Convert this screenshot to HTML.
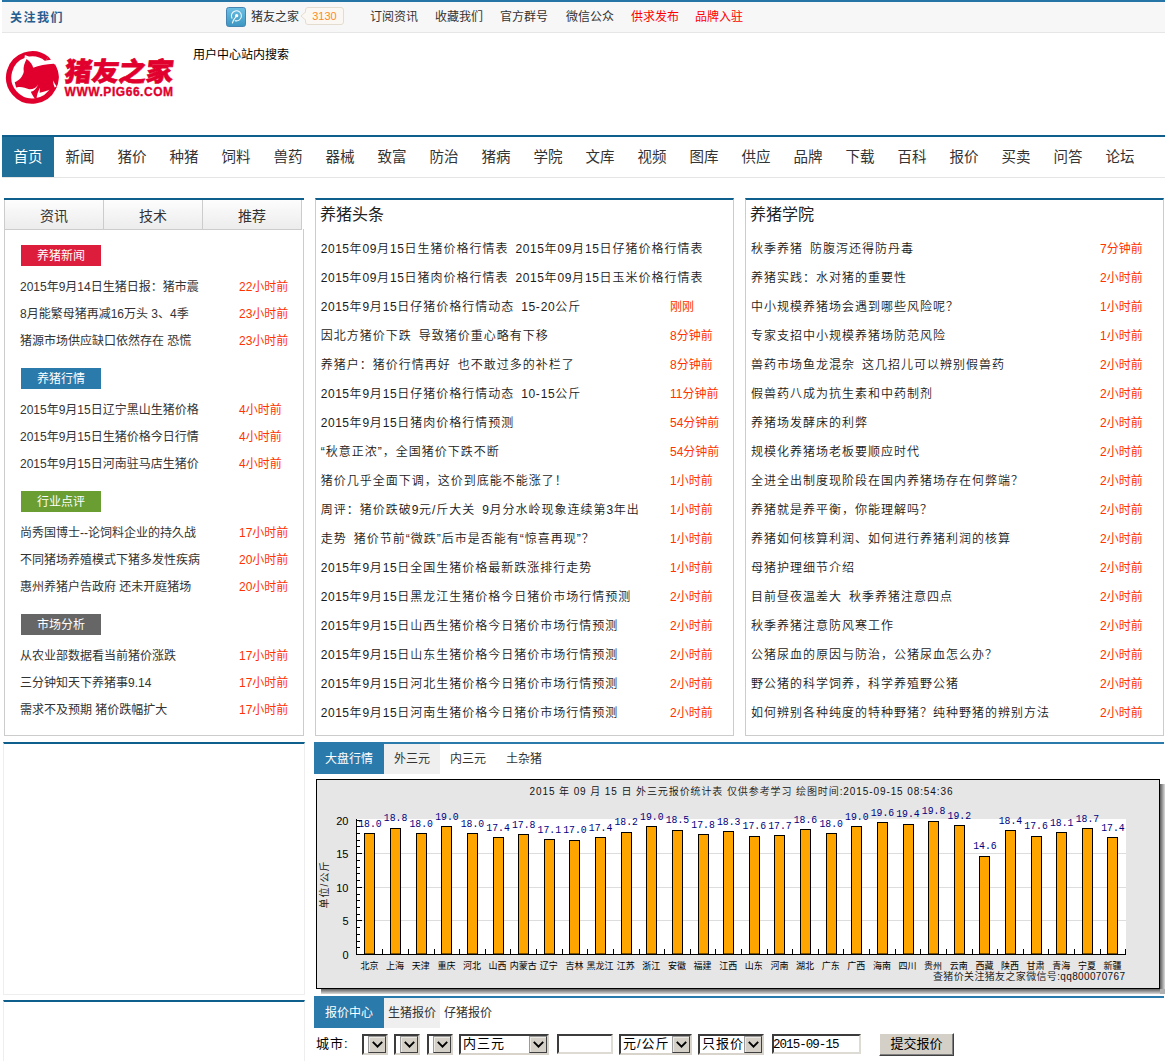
<!DOCTYPE html>
<html lang="zh-CN">
<head>
<meta charset="utf-8">
<title>猪友之家</title>
<style>
*{margin:0;padding:0;box-sizing:border-box;}
html,body{width:1167px;height:1061px;overflow:hidden;background:#fff;}
body{font-family:"Liberation Sans","Noto Sans CJK SC",sans-serif;font-size:12px;color:#333;position:relative;}
.abs{position:absolute;}
#topbar{left:2px;top:0;width:1163px;height:33px;border-top:2px solid #2576a6;border-bottom:1px solid #e6e6e6;background:#f7f7f7;}
#topbar .t{position:absolute;top:5px;line-height:20px;font-size:12px;color:#333;white-space:nowrap;}
#logo{left:0;top:45px;width:180px;height:65px;}
#logo .cn{position:absolute;left:62.5px;top:13px;font-size:27.5px;line-height:27px;font-weight:900;color:#e1002d;white-space:nowrap;transform:skewX(-7deg) scaleY(.95);transform-origin:0 100%;-webkit-text-stroke:.7px #e1002d;letter-spacing:-.3px}
#logo .en{position:absolute;left:64.5px;top:40px;font-size:12px;line-height:14px;font-weight:bold;color:#e1002d;white-space:nowrap;letter-spacing:.55px;-webkit-text-stroke:.35px #e1002d;}
#usr{left:193px;top:48px;font-size:12px;line-height:14px;color:#000;white-space:nowrap;}
#nav{left:2px;top:135px;width:1163px;height:43px;border-top:2px solid #0f5f8d;border-bottom:1px solid #e5e5e5;background:#fff;}
#nav a{float:left;width:52px;height:40px;line-height:40px;text-align:center;font-size:14.5px;color:#333;text-decoration:none;}
#nav a.on{background:#206f98;color:#fff;}
#lp{left:4px;top:198px;width:300px;height:538px;}
#lp .tabs{height:31px;border-top:2px solid #0f5f8d;position:relative;}
#lp .tabs span{position:absolute;top:0;height:30px;width:100px;line-height:32px;text-align:center;font-size:14px;color:#333;border:1px solid #ccc;border-top:0;background:linear-gradient(#fdfdfd,#ececec);}
#lp .body{position:absolute;left:0;top:31px;width:300px;height:507px;border:1px solid #ccc;border-top:0;}
.tag{position:absolute;left:16px;width:80px;height:21px;line-height:22.5px;text-align:center;color:#fff;font-size:12px;}
.lrow{position:absolute;left:15px;width:275px;height:20px;line-height:20px;font-size:12px;color:#333;white-space:nowrap;}
.lrow i{position:absolute;left:219px;top:0;font-style:normal;color:#ff3300;}
.panel{border:1px solid #ccc;border-top:2px solid #0f5f8d;background:#fff;}
.panel h3{position:absolute;left:4px;top:4px;font-size:16px;line-height:22px;font-weight:normal;color:#222;}
.row{position:absolute;left:4.7px;height:20px;line-height:20px;font-size:12px;color:#1a1a1a;font-weight:350;letter-spacing:1px;word-spacing:2.7px;white-space:nowrap;}
.row u{text-decoration:none;letter-spacing:.55px;}
.row i{position:absolute;top:0;font-style:normal;color:#ff3300;letter-spacing:0;font-weight:400;}
#mp .row i{left:349.3px;}
#rp .row i{left:349px;}
.stab{position:absolute;top:0;height:30px;line-height:31px;font-size:12px;color:#333;text-align:center;white-space:nowrap;}
.stab.on{background:#2a7aab;color:#fff;}
.stab.g{background:#efefef;}
.sel{position:absolute;top:1034px;height:21px;border:2px solid;border-color:#3c3c3c #d8d4cc #d8d4cc #3c3c3c;background:#fff;font-size:13px;line-height:16px;color:#000;white-space:nowrap;overflow:hidden;padding-left:2px;letter-spacing:1px;}
.sel b{position:absolute;right:0;top:0;bottom:0;width:18px;background:#d4d0c8;border:1px solid;border-color:#9a9a9a #404040 #404040 #9a9a9a;box-shadow:inset 1px 1px 0 #ece9e2;font-weight:normal;}
.sel b svg{position:absolute;left:3px;top:4px;}
.inp{position:absolute;top:1034px;height:20px;border:2px solid;border-color:#3c3c3c #dedbd4 #dedbd4 #3c3c3c;background:#fff;font-size:12.5px;line-height:18px;color:#000;padding-left:0;text-indent:-1px;letter-spacing:-.95px;font-family:"Liberation Mono",monospace;}
</style>
</head>
<body>
<div id="topbar" class="abs">
<span class="t" style="left:8px;top:6px;font-weight:bold;color:#275c8e;letter-spacing:1.5px">关注我们</span>
<svg class="abs" style="left:224px;top:5px" width="20" height="20" viewBox="0 0 20 20"><defs><linearGradient id="tg" x1="0" y1="0" x2="0" y2="1"><stop offset="0" stop-color="#6cc0e4"/><stop offset="1" stop-color="#3b96c1"/></linearGradient></defs><rect x=".5" y=".5" width="19" height="19" rx="2.2" fill="url(#tg)" stroke="#4684b4"/><path d="M5.99 11.20 A5.0 5.0 0 1 1 9.11 13.68" fill="none" stroke="#f2fafd" stroke-width="1.05" stroke-linecap="round"/><circle cx="10.65" cy="8.7" r="1.65" fill="#fff"/><path d="M10 9.6 C8.6 11.2 7.2 13 6.4 16" fill="none" stroke="#f2fafd" stroke-width="1.05" stroke-linecap="round"/></svg>
<span class="t" style="left:249px">猪友之家</span>
<span class="abs" style="left:303px;top:5px;width:39px;height:18px;border:1px solid #e3dccf;border-radius:3px;background:#fbf8f3;color:#ff8a1f;font-size:11px;line-height:17px;text-align:center;">3130</span>
<svg class="abs" style="left:298px;top:9px" width="6" height="10" viewBox="0 0 6 10"><path d="M6 0.5 L1 5 L6 9.5" fill="#fbf8f3" stroke="#e3dccf"/></svg>
<span class="t" style="left:368px;color:#333">订阅资讯</span>
<span class="t" style="left:433px;color:#333">收藏我们</span>
<span class="t" style="left:498px;color:#333">官方群号</span>
<span class="t" style="left:564px;color:#333">微信公众</span>
<span class="t" style="left:629px;color:#f00">供求发布</span>
<span class="t" style="left:693px;color:#f00">品牌入驻</span>
</div>
<div id="logo" class="abs">
<svg class="abs" style="left:2px;top:3px" width="60" height="60" viewBox="0 0 1061 1061"><g fill="#e1002d"><path d="M896.6 311 A417.5 417.5 0 1 1 792 191" fill="none" stroke="#e1002d" stroke-width="95"/><path d="M821 154 L866 207 L750 224 L762 228 Z"/><path d="M435 195 C500 240 540 300 552 350 C650 310 780 288 915 280 L926 287 A465 465 0 0 1 950 730 L920 705 C860 740 760 775 665 790 L672 705 C640 770 615 830 612 890 L580 895 C555 860 525 820 510 775 C570 760 615 710 640 640 C610 700 560 730 480 728 C420 710 340 680 275 695 L250 700 L225 605 C300 580 370 500 385 420 C370 340 400 260 435 195 Z"/></g><path d="M905 575 C903 620 913 660 933 697 L966 682 C940 650 920 610 905 575 Z" fill="#fff"/><path d="M405 125 L482 156 L440 166 L396 190 Z" fill="#fff"/></svg>
<span class="cn">猪友之家</span>
<span class="en">WWW.PIG66.COM</span>
</div>
<div id="usr" class="abs">用户中心站内搜索</div>
<div id="nav" class="abs"><a class="on">首页</a><a>新闻</a><a>猪价</a><a>种猪</a><a>饲料</a><a>兽药</a><a>器械</a><a>致富</a><a>防治</a><a>猪病</a><a>学院</a><a>文库</a><a>视频</a><a>图库</a><a>供应</a><a>品牌</a><a>下载</a><a>百科</a><a>报价</a><a>买卖</a><a>问答</a><a>论坛</a></div>
<div id="lp" class="abs"><div class="tabs">
<span style="left:0px">资讯</span>
<span style="left:99px">技术</span>
<span style="left:198px">推荐</span>
</div><div class="body">
<div class="tag" style="top:16px;background:#dc1e3c">养猪新闻</div>
<div class="lrow" style="top:48px">2015年9月14日生猪日报：猪市震<i>22小时前</i></div>
<div class="lrow" style="top:75px">8月能繁母猪再减16万头 3、4季<i>23小时前</i></div>
<div class="lrow" style="top:102px">猪源市场供应缺口依然存在 恐慌<i>23小时前</i></div>
<div class="tag" style="top:139px;background:#2a7aab">养猪行情</div>
<div class="lrow" style="top:171px">2015年9月15日辽宁黑山生猪价格<i>4小时前</i></div>
<div class="lrow" style="top:198px">2015年9月15日生猪价格今日行情<i>4小时前</i></div>
<div class="lrow" style="top:225px">2015年9月15日河南驻马店生猪价<i>4小时前</i></div>
<div class="tag" style="top:262px;background:#6a9e32">行业点评</div>
<div class="lrow" style="top:294px">尚秀国博士--论饲料企业的持久战<i>17小时前</i></div>
<div class="lrow" style="top:321px">不同猪场养殖模式下猪多发性疾病<i>20小时前</i></div>
<div class="lrow" style="top:348px">惠州养猪户告政府 还未开庭猪场<i>20小时前</i></div>
<div class="tag" style="top:385px;background:#666666">市场分析</div>
<div class="lrow" style="top:417px">从农业部数据看当前猪价涨跌<i>17小时前</i></div>
<div class="lrow" style="top:444px">三分钟知天下养猪事9.14<i>17小时前</i></div>
<div class="lrow" style="top:471px">需求不及预期 猪价跌幅扩大<i>17小时前</i></div>
</div></div>
<div class="abs" style="left:3px;top:742px;width:302px;height:253px;border:1px solid #eee;border-top:2px solid #0f5f8d"></div>
<div class="abs" style="left:3px;top:1000px;width:302px;height:70px;border:1px solid #eee;border-top:2px solid #0f5f8d"></div>
<div id="mp" class="abs panel" style="left:315px;top:198px;width:419px;height:538px"><h3>养猪头条</h3>
<div class="row" style="top:39px"><u>2015</u>年<u>09</u>月<u>15</u>日生猪价格行情表 <u>2015</u>年<u>09</u>月<u>15</u>日仔猪价格行情表</div>
<div class="row" style="top:68px"><u>2015</u>年<u>09</u>月<u>15</u>日猪肉价格行情表 <u>2015</u>年<u>09</u>月<u>15</u>日玉米价格行情表</div>
<div class="row" style="top:97px"><u>2015</u>年<u>9</u>月<u>15</u>日仔猪价格行情动态 <u>15</u>-<u>20</u>公斤<i>刚刚</i></div>
<div class="row" style="top:126px">因北方猪价下跌 导致猪价重心略有下移<i>8分钟前</i></div>
<div class="row" style="top:155px">养猪户：猪价行情再好 也不敢过多的补栏了<i>8分钟前</i></div>
<div class="row" style="top:184px"><u>2015</u>年<u>9</u>月<u>15</u>日仔猪价格行情动态 <u>10</u>-<u>15</u>公斤<i>11分钟前</i></div>
<div class="row" style="top:213px"><u>2015</u>年<u>9</u>月<u>15</u>日猪肉价格行情预测<i>54分钟前</i></div>
<div class="row" style="top:242px">“秋意正浓”，全国猪价下跌不断<i>54分钟前</i></div>
<div class="row" style="top:271px">猪价几乎全面下调，这价到底能不能涨了！<i>1小时前</i></div>
<div class="row" style="top:300px">周评：猪价跌破<u>9</u>元/斤大关 <u>9</u>月分水岭现象连续第<u>3</u>年出<i>1小时前</i></div>
<div class="row" style="top:329px">走势 猪价节前“微跌”后市是否能有“惊喜再现”？<i>1小时前</i></div>
<div class="row" style="top:358px"><u>2015</u>年<u>9</u>月<u>15</u>日全国生猪价格最新跌涨排行走势<i>1小时前</i></div>
<div class="row" style="top:387px"><u>2015</u>年<u>9</u>月<u>15</u>日黑龙江生猪价格今日猪价市场行情预测<i>2小时前</i></div>
<div class="row" style="top:416px"><u>2015</u>年<u>9</u>月<u>15</u>日山西生猪价格今日猪价市场行情预测<i>2小时前</i></div>
<div class="row" style="top:445px"><u>2015</u>年<u>9</u>月<u>15</u>日山东生猪价格今日猪价市场行情预测<i>2小时前</i></div>
<div class="row" style="top:474px"><u>2015</u>年<u>9</u>月<u>15</u>日河北生猪价格今日猪价市场行情预测<i>2小时前</i></div>
<div class="row" style="top:503px"><u>2015</u>年<u>9</u>月<u>15</u>日河南生猪价格今日猪价市场行情预测<i>2小时前</i></div>
</div>
<div id="rp" class="abs panel" style="left:745px;top:198px;width:419px;height:538px"><h3 style="left:4px">养猪学院</h3>
<div class="row" style="top:39px;left:5px">秋季养猪 防腹泻还得防丹毒<i style="left:349px">7分钟前</i></div>
<div class="row" style="top:68px;left:5px">养猪实践：水对猪的重要性<i style="left:349px">2小时前</i></div>
<div class="row" style="top:97px;left:5px">中小规模养猪场会遇到哪些风险呢？<i style="left:349px">1小时前</i></div>
<div class="row" style="top:126px;left:5px">专家支招中小规模养猪场防范风险<i style="left:349px">1小时前</i></div>
<div class="row" style="top:155px;left:5px">兽药市场鱼龙混杂 这几招儿可以辨别假兽药<i style="left:349px">2小时前</i></div>
<div class="row" style="top:184px;left:5px">假兽药八成为抗生素和中药制剂<i style="left:349px">2小时前</i></div>
<div class="row" style="top:213px;left:5px">养猪场发酵床的利弊<i style="left:349px">2小时前</i></div>
<div class="row" style="top:242px;left:5px">规模化养猪场老板要顺应时代<i style="left:349px">2小时前</i></div>
<div class="row" style="top:271px;left:5px">全进全出制度现阶段在国内养猪场存在何弊端？<i style="left:349px">2小时前</i></div>
<div class="row" style="top:300px;left:5px">养猪就是养平衡，你能理解吗？<i style="left:349px">2小时前</i></div>
<div class="row" style="top:329px;left:5px">养猪如何核算利润、如何进行养猪利润的核算<i style="left:349px">2小时前</i></div>
<div class="row" style="top:358px;left:5px">母猪护理细节介绍<i style="left:349px">2小时前</i></div>
<div class="row" style="top:387px;left:5px">目前昼夜温差大 秋季养猪注意四点<i style="left:349px">2小时前</i></div>
<div class="row" style="top:416px;left:5px">秋季养猪注意防风寒工作<i style="left:349px">2小时前</i></div>
<div class="row" style="top:445px;left:5px">公猪尿血的原因与防治，公猪尿血怎么办？<i style="left:349px">2小时前</i></div>
<div class="row" style="top:474px;left:5px">野公猪的科学饲养，科学养殖野公猪<i style="left:349px">2小时前</i></div>
<div class="row" style="top:503px;left:5px">如何辨别各种纯度的特种野猪？纯种野猪的辨别方法<i style="left:349px">2小时前</i></div>
</div>
<div class="abs" style="left:314px;top:742px;width:850px;height:32px;border-top:2px solid #2a7aab">
<span class="stab on" style="left:0;width:70px">大盘行情</span>
<span class="stab g" style="left:70px;width:56px">外三元</span>
<span class="stab" style="left:126px;width:56px">内三元</span>
<span class="stab" style="left:182px;width:56px">土杂猪</span>
</div>
<svg class="abs" style="left:316px;top:779px" width="850" height="216" viewBox="0 0 850 216" font-family="Liberation Sans, Noto Sans CJK SC, sans-serif">
<defs><linearGradient id="sh1" x1="0" y1="0" x2="1" y2="0"><stop offset="0" stop-color="#5c5c5c"/><stop offset="1" stop-color="#dcdcdc"/></linearGradient><linearGradient id="sh2" x1="0" y1="0" x2="0" y2="1"><stop offset="0" stop-color="#5c5c5c"/><stop offset="1" stop-color="#dcdcdc"/></linearGradient></defs>
<rect x="844" y="5" width="5" height="209" fill="url(#sh1)"/>
<rect x="5" y="210" width="839" height="5" fill="url(#sh2)"/>
<path d="M844 210 h5 v5 h-5 z" fill="#b0b0b0"/>
<rect x="0.5" y="0.5" width="843" height="209" fill="#e6e6e6" stroke="#000"/>
<rect x="40" y="40" width="770" height="135" fill="#fff"/>
<line x1="40" y1="141.5" x2="810" y2="141.5" stroke="#ddd"/>
<line x1="40" y1="108.5" x2="810" y2="108.5" stroke="#ddd"/>
<line x1="40" y1="74.5" x2="810" y2="74.5" stroke="#ddd"/>
<path d="M40.5 40 V175.5 H810" fill="none" stroke="#000"/>
<line x1="40" y1="175.5" x2="46" y2="175.5" stroke="#000"/>
<line x1="40" y1="168.5" x2="44" y2="168.5" stroke="#000"/>
<line x1="40" y1="162.5" x2="44" y2="162.5" stroke="#000"/>
<line x1="40" y1="155.5" x2="44" y2="155.5" stroke="#000"/>
<line x1="40" y1="148.5" x2="44" y2="148.5" stroke="#000"/>
<line x1="40" y1="141.5" x2="46" y2="141.5" stroke="#000"/>
<line x1="40" y1="135.5" x2="44" y2="135.5" stroke="#000"/>
<line x1="40" y1="128.5" x2="44" y2="128.5" stroke="#000"/>
<line x1="40" y1="121.5" x2="44" y2="121.5" stroke="#000"/>
<line x1="40" y1="115.5" x2="44" y2="115.5" stroke="#000"/>
<line x1="40" y1="108.5" x2="46" y2="108.5" stroke="#000"/>
<line x1="40" y1="101.5" x2="44" y2="101.5" stroke="#000"/>
<line x1="40" y1="94.5" x2="44" y2="94.5" stroke="#000"/>
<line x1="40" y1="88.5" x2="44" y2="88.5" stroke="#000"/>
<line x1="40" y1="81.5" x2="44" y2="81.5" stroke="#000"/>
<line x1="40" y1="74.5" x2="46" y2="74.5" stroke="#000"/>
<line x1="40" y1="67.5" x2="44" y2="67.5" stroke="#000"/>
<line x1="40" y1="61.5" x2="44" y2="61.5" stroke="#000"/>
<line x1="40" y1="54.5" x2="44" y2="54.5" stroke="#000"/>
<line x1="40" y1="47.5" x2="44" y2="47.5" stroke="#000"/>
<line x1="40" y1="41.5" x2="46" y2="41.5" stroke="#000"/>
<text x="32.5" y="180" font-size="11" text-anchor="end" fill="#000">0</text>
<text x="32.5" y="146.4" font-size="11" text-anchor="end" fill="#000">5</text>
<text x="32.5" y="112.8" font-size="11" text-anchor="end" fill="#000">10</text>
<text x="32.5" y="79.2" font-size="11" text-anchor="end" fill="#000">15</text>
<text x="32.5" y="45.6" font-size="11" text-anchor="end" fill="#000">20</text>
<text x="425" y="16" font-size="10" font-weight="350" text-anchor="middle" fill="#111" textLength="423" lengthAdjust="spacing">2015 年 09 月 15 日 外三元报价统计表 仅供参考学习 绘图时间:2015-09-15 08:54:36</text>
<text transform="translate(12 106) rotate(-90)" font-size="10" text-anchor="middle" fill="#222" textLength="47" lengthAdjust="spacing">单位/公斤</text>
<rect x="48.5" y="54.5" width="10" height="120.5" fill="#ffa500" stroke="#000"/>
<line x1="66.5" y1="170" x2="66.5" y2="175" stroke="#000"/>
<text x="54.0" y="47.5" font-size="11" text-anchor="middle" fill="#000080" font-family="Liberation Mono, monospace" textLength="23.5" lengthAdjust="spacingAndGlyphs">18.0</text>
<text x="53.5" y="189.5" font-size="9" text-anchor="middle" fill="#000">北京</text>
<rect x="74.5" y="49.5" width="10" height="125.5" fill="#ffa500" stroke="#000"/>
<line x1="92.5" y1="170" x2="92.5" y2="175" stroke="#000"/>
<text x="79.6" y="42.2" font-size="11" text-anchor="middle" fill="#000080" font-family="Liberation Mono, monospace" textLength="23.5" lengthAdjust="spacingAndGlyphs">18.8</text>
<text x="79.1" y="189.5" font-size="9" text-anchor="middle" fill="#000">上海</text>
<rect x="100.5" y="54.5" width="10" height="120.5" fill="#ffa500" stroke="#000"/>
<line x1="118.5" y1="170" x2="118.5" y2="175" stroke="#000"/>
<text x="105.2" y="47.5" font-size="11" text-anchor="middle" fill="#000080" font-family="Liberation Mono, monospace" textLength="23.5" lengthAdjust="spacingAndGlyphs">18.0</text>
<text x="104.7" y="189.5" font-size="9" text-anchor="middle" fill="#000">天津</text>
<rect x="125.5" y="47.5" width="10" height="127.5" fill="#ffa500" stroke="#000"/>
<line x1="143.5" y1="170" x2="143.5" y2="175" stroke="#000"/>
<text x="130.9" y="40.8" font-size="11" text-anchor="middle" fill="#000080" font-family="Liberation Mono, monospace" textLength="23.5" lengthAdjust="spacingAndGlyphs">19.0</text>
<text x="130.4" y="189.5" font-size="9" text-anchor="middle" fill="#000">重庆</text>
<rect x="151.5" y="54.5" width="10" height="120.5" fill="#ffa500" stroke="#000"/>
<line x1="169.5" y1="170" x2="169.5" y2="175" stroke="#000"/>
<text x="156.5" y="47.5" font-size="11" text-anchor="middle" fill="#000080" font-family="Liberation Mono, monospace" textLength="23.5" lengthAdjust="spacingAndGlyphs">18.0</text>
<text x="156.0" y="189.5" font-size="9" text-anchor="middle" fill="#000">河北</text>
<rect x="177.5" y="58.5" width="10" height="116.5" fill="#ffa500" stroke="#000"/>
<line x1="194.5" y1="170" x2="194.5" y2="175" stroke="#000"/>
<text x="182.1" y="51.6" font-size="11" text-anchor="middle" fill="#000080" font-family="Liberation Mono, monospace" textLength="23.5" lengthAdjust="spacingAndGlyphs">17.4</text>
<text x="181.6" y="189.5" font-size="9" text-anchor="middle" fill="#000">山西</text>
<rect x="202.5" y="55.5" width="10" height="119.5" fill="#ffa500" stroke="#000"/>
<line x1="220.5" y1="170" x2="220.5" y2="175" stroke="#000"/>
<text x="207.7" y="48.9" font-size="11" text-anchor="middle" fill="#000080" font-family="Liberation Mono, monospace" textLength="23.5" lengthAdjust="spacingAndGlyphs">17.8</text>
<text x="207.2" y="189.5" font-size="9" text-anchor="middle" fill="#000">内蒙古</text>
<rect x="228.5" y="60.5" width="10" height="114.5" fill="#ffa500" stroke="#000"/>
<line x1="246.5" y1="170" x2="246.5" y2="175" stroke="#000"/>
<text x="233.3" y="53.6" font-size="11" text-anchor="middle" fill="#000080" font-family="Liberation Mono, monospace" textLength="23.5" lengthAdjust="spacingAndGlyphs">17.1</text>
<text x="232.8" y="189.5" font-size="9" text-anchor="middle" fill="#000">辽宁</text>
<rect x="253.5" y="61.5" width="10" height="113.5" fill="#ffa500" stroke="#000"/>
<line x1="271.5" y1="170" x2="271.5" y2="175" stroke="#000"/>
<text x="259.0" y="54.3" font-size="11" text-anchor="middle" fill="#000080" font-family="Liberation Mono, monospace" textLength="23.5" lengthAdjust="spacingAndGlyphs">17.0</text>
<text x="258.5" y="189.5" font-size="9" text-anchor="middle" fill="#000">吉林</text>
<rect x="279.5" y="58.5" width="10" height="116.5" fill="#ffa500" stroke="#000"/>
<line x1="297.5" y1="170" x2="297.5" y2="175" stroke="#000"/>
<text x="284.6" y="51.6" font-size="11" text-anchor="middle" fill="#000080" font-family="Liberation Mono, monospace" textLength="23.5" lengthAdjust="spacingAndGlyphs">17.4</text>
<text x="284.1" y="189.5" font-size="9" text-anchor="middle" fill="#000">黑龙江</text>
<rect x="305.5" y="53.5" width="10" height="121.5" fill="#ffa500" stroke="#000"/>
<line x1="323.5" y1="170" x2="323.5" y2="175" stroke="#000"/>
<text x="310.2" y="46.2" font-size="11" text-anchor="middle" fill="#000080" font-family="Liberation Mono, monospace" textLength="23.5" lengthAdjust="spacingAndGlyphs">18.2</text>
<text x="309.7" y="189.5" font-size="9" text-anchor="middle" fill="#000">江苏</text>
<rect x="330.5" y="47.5" width="10" height="127.5" fill="#ffa500" stroke="#000"/>
<line x1="348.5" y1="170" x2="348.5" y2="175" stroke="#000"/>
<text x="335.8" y="40.8" font-size="11" text-anchor="middle" fill="#000080" font-family="Liberation Mono, monospace" textLength="23.5" lengthAdjust="spacingAndGlyphs">19.0</text>
<text x="335.3" y="189.5" font-size="9" text-anchor="middle" fill="#000">浙江</text>
<rect x="356.5" y="51.5" width="10" height="123.5" fill="#ffa500" stroke="#000"/>
<line x1="374.5" y1="170" x2="374.5" y2="175" stroke="#000"/>
<text x="361.4" y="44.2" font-size="11" text-anchor="middle" fill="#000080" font-family="Liberation Mono, monospace" textLength="23.5" lengthAdjust="spacingAndGlyphs">18.5</text>
<text x="360.9" y="189.5" font-size="9" text-anchor="middle" fill="#000">安徽</text>
<rect x="382.5" y="55.5" width="10" height="119.5" fill="#ffa500" stroke="#000"/>
<line x1="399.5" y1="170" x2="399.5" y2="175" stroke="#000"/>
<text x="387.1" y="48.9" font-size="11" text-anchor="middle" fill="#000080" font-family="Liberation Mono, monospace" textLength="23.5" lengthAdjust="spacingAndGlyphs">17.8</text>
<text x="386.6" y="189.5" font-size="9" text-anchor="middle" fill="#000">福建</text>
<rect x="407.5" y="52.5" width="10" height="122.5" fill="#ffa500" stroke="#000"/>
<line x1="425.5" y1="170" x2="425.5" y2="175" stroke="#000"/>
<text x="412.7" y="45.5" font-size="11" text-anchor="middle" fill="#000080" font-family="Liberation Mono, monospace" textLength="23.5" lengthAdjust="spacingAndGlyphs">18.3</text>
<text x="412.2" y="189.5" font-size="9" text-anchor="middle" fill="#000">江西</text>
<rect x="433.5" y="57.5" width="10" height="117.5" fill="#ffa500" stroke="#000"/>
<line x1="451.5" y1="170" x2="451.5" y2="175" stroke="#000"/>
<text x="438.3" y="50.2" font-size="11" text-anchor="middle" fill="#000080" font-family="Liberation Mono, monospace" textLength="23.5" lengthAdjust="spacingAndGlyphs">17.6</text>
<text x="437.8" y="189.5" font-size="9" text-anchor="middle" fill="#000">山东</text>
<rect x="458.5" y="56.5" width="10" height="118.5" fill="#ffa500" stroke="#000"/>
<line x1="476.5" y1="170" x2="476.5" y2="175" stroke="#000"/>
<text x="463.9" y="49.6" font-size="11" text-anchor="middle" fill="#000080" font-family="Liberation Mono, monospace" textLength="23.5" lengthAdjust="spacingAndGlyphs">17.7</text>
<text x="463.4" y="189.5" font-size="9" text-anchor="middle" fill="#000">河南</text>
<rect x="484.5" y="50.5" width="10" height="124.5" fill="#ffa500" stroke="#000"/>
<line x1="502.5" y1="170" x2="502.5" y2="175" stroke="#000"/>
<text x="489.5" y="43.5" font-size="11" text-anchor="middle" fill="#000080" font-family="Liberation Mono, monospace" textLength="23.5" lengthAdjust="spacingAndGlyphs">18.6</text>
<text x="489.0" y="189.5" font-size="9" text-anchor="middle" fill="#000">湖北</text>
<rect x="510.5" y="54.5" width="10" height="120.5" fill="#ffa500" stroke="#000"/>
<line x1="527.5" y1="170" x2="527.5" y2="175" stroke="#000"/>
<text x="515.2" y="47.5" font-size="11" text-anchor="middle" fill="#000080" font-family="Liberation Mono, monospace" textLength="23.5" lengthAdjust="spacingAndGlyphs">18.0</text>
<text x="514.7" y="189.5" font-size="9" text-anchor="middle" fill="#000">广东</text>
<rect x="535.5" y="47.5" width="10" height="127.5" fill="#ffa500" stroke="#000"/>
<line x1="553.5" y1="170" x2="553.5" y2="175" stroke="#000"/>
<text x="540.8" y="40.8" font-size="11" text-anchor="middle" fill="#000080" font-family="Liberation Mono, monospace" textLength="23.5" lengthAdjust="spacingAndGlyphs">19.0</text>
<text x="540.3" y="189.5" font-size="9" text-anchor="middle" fill="#000">广西</text>
<rect x="561.5" y="43.5" width="10" height="131.5" fill="#ffa500" stroke="#000"/>
<line x1="579.5" y1="170" x2="579.5" y2="175" stroke="#000"/>
<text x="566.4" y="36.8" font-size="11" text-anchor="middle" fill="#000080" font-family="Liberation Mono, monospace" textLength="23.5" lengthAdjust="spacingAndGlyphs">19.6</text>
<text x="565.9" y="189.5" font-size="9" text-anchor="middle" fill="#000">海南</text>
<rect x="587.5" y="45.5" width="10" height="129.5" fill="#ffa500" stroke="#000"/>
<line x1="604.5" y1="170" x2="604.5" y2="175" stroke="#000"/>
<text x="592.0" y="38.1" font-size="11" text-anchor="middle" fill="#000080" font-family="Liberation Mono, monospace" textLength="23.5" lengthAdjust="spacingAndGlyphs">19.4</text>
<text x="591.5" y="189.5" font-size="9" text-anchor="middle" fill="#000">四川</text>
<rect x="612.5" y="42.5" width="10" height="132.5" fill="#ffa500" stroke="#000"/>
<line x1="630.5" y1="170" x2="630.5" y2="175" stroke="#000"/>
<text x="617.6" y="35.4" font-size="11" text-anchor="middle" fill="#000080" font-family="Liberation Mono, monospace" textLength="23.5" lengthAdjust="spacingAndGlyphs">19.8</text>
<text x="617.1" y="189.5" font-size="9" text-anchor="middle" fill="#000">贵州</text>
<rect x="638.5" y="46.5" width="10" height="128.5" fill="#ffa500" stroke="#000"/>
<line x1="656.5" y1="170" x2="656.5" y2="175" stroke="#000"/>
<text x="643.3" y="39.5" font-size="11" text-anchor="middle" fill="#000080" font-family="Liberation Mono, monospace" textLength="23.5" lengthAdjust="spacingAndGlyphs">19.2</text>
<text x="642.8" y="189.5" font-size="9" text-anchor="middle" fill="#000">云南</text>
<rect x="663.5" y="77.5" width="10" height="97.5" fill="#ffa500" stroke="#000"/>
<line x1="681.5" y1="170" x2="681.5" y2="175" stroke="#000"/>
<text x="668.9" y="70.4" font-size="11" text-anchor="middle" fill="#000080" font-family="Liberation Mono, monospace" textLength="23.5" lengthAdjust="spacingAndGlyphs">14.6</text>
<text x="668.4" y="189.5" font-size="9" text-anchor="middle" fill="#000">西藏</text>
<rect x="689.5" y="51.5" width="10" height="123.5" fill="#ffa500" stroke="#000"/>
<line x1="707.5" y1="170" x2="707.5" y2="175" stroke="#000"/>
<text x="694.5" y="44.9" font-size="11" text-anchor="middle" fill="#000080" font-family="Liberation Mono, monospace" textLength="23.5" lengthAdjust="spacingAndGlyphs">18.4</text>
<text x="694.0" y="189.5" font-size="9" text-anchor="middle" fill="#000">陕西</text>
<rect x="715.5" y="57.5" width="10" height="117.5" fill="#ffa500" stroke="#000"/>
<line x1="732.5" y1="170" x2="732.5" y2="175" stroke="#000"/>
<text x="720.1" y="50.2" font-size="11" text-anchor="middle" fill="#000080" font-family="Liberation Mono, monospace" textLength="23.5" lengthAdjust="spacingAndGlyphs">17.6</text>
<text x="719.6" y="189.5" font-size="9" text-anchor="middle" fill="#000">甘肃</text>
<rect x="740.5" y="53.5" width="10" height="121.5" fill="#ffa500" stroke="#000"/>
<line x1="758.5" y1="170" x2="758.5" y2="175" stroke="#000"/>
<text x="745.7" y="46.9" font-size="11" text-anchor="middle" fill="#000080" font-family="Liberation Mono, monospace" textLength="23.5" lengthAdjust="spacingAndGlyphs">18.1</text>
<text x="745.2" y="189.5" font-size="9" text-anchor="middle" fill="#000">青海</text>
<rect x="766.5" y="49.5" width="10" height="125.5" fill="#ffa500" stroke="#000"/>
<line x1="784.5" y1="170" x2="784.5" y2="175" stroke="#000"/>
<text x="771.4" y="42.8" font-size="11" text-anchor="middle" fill="#000080" font-family="Liberation Mono, monospace" textLength="23.5" lengthAdjust="spacingAndGlyphs">18.7</text>
<text x="770.9" y="189.5" font-size="9" text-anchor="middle" fill="#000">宁夏</text>
<rect x="791.5" y="58.5" width="10" height="116.5" fill="#ffa500" stroke="#000"/>
<line x1="809.5" y1="170" x2="809.5" y2="175" stroke="#000"/>
<text x="797.0" y="51.6" font-size="11" text-anchor="middle" fill="#000080" font-family="Liberation Mono, monospace" textLength="23.5" lengthAdjust="spacingAndGlyphs">17.4</text>
<text x="796.5" y="189.5" font-size="9" text-anchor="middle" fill="#000">新疆</text>
<text x="809" y="200.5" font-size="10" font-weight="350" text-anchor="end" fill="#111" textLength="192" lengthAdjust="spacing">查猪价关注猪友之家微信号:qq800070767</text>
</svg>
<div class="abs" style="left:314px;top:996px;width:850px;height:32px;border-top:2px solid #2a7aab">
<span class="stab on" style="left:0;width:70px">报价中心</span>
<span class="stab g" style="left:70px;width:56px">生猪报价</span>
<span class="stab" style="left:126px;width:56px">仔猪报价</span>
</div>
<span class="abs" style="left:316px;top:1035px;font-size:13px;line-height:18px;color:#000;letter-spacing:1px">城市:</span>
<span class="sel" style="left:362px;width:26px"><b><svg width="11" height="7" viewBox="0 0 11 7"><path d="M0.8 0.8 L5.5 5.6 L10.2 0.8" fill="none" stroke="#000" stroke-width="1.9"/></svg></b></span>
<span class="sel" style="left:394px;width:26px"><b><svg width="11" height="7" viewBox="0 0 11 7"><path d="M0.8 0.8 L5.5 5.6 L10.2 0.8" fill="none" stroke="#000" stroke-width="1.9"/></svg></b></span>
<span class="sel" style="left:427px;width:26px"><b><svg width="11" height="7" viewBox="0 0 11 7"><path d="M0.8 0.8 L5.5 5.6 L10.2 0.8" fill="none" stroke="#000" stroke-width="1.9"/></svg></b></span>
<span class="sel" style="left:459px;width:90px">内三元<b><svg width="11" height="7" viewBox="0 0 11 7"><path d="M0.8 0.8 L5.5 5.6 L10.2 0.8" fill="none" stroke="#000" stroke-width="1.9"/></svg></b></span>
<span class="inp" style="left:557px;width:56px"></span>
<span class="sel" style="left:619px;width:73px">元/公斤<b><svg width="11" height="7" viewBox="0 0 11 7"><path d="M0.8 0.8 L5.5 5.6 L10.2 0.8" fill="none" stroke="#000" stroke-width="1.9"/></svg></b></span>
<span class="sel" style="left:698px;width:66px">只报价<b><svg width="11" height="7" viewBox="0 0 11 7"><path d="M0.8 0.8 L5.5 5.6 L10.2 0.8" fill="none" stroke="#000" stroke-width="1.9"/></svg></b></span>
<span class="inp" style="left:772px;width:89px">2015-09-15</span>
<span class="abs" style="left:879px;top:1033px;width:75px;height:23px;background:#d4d0c8;border:1px solid #fff;border-right-color:#404040;border-bottom-color:#404040;box-shadow:inset -1px -1px 0 #808080;font-size:13px;line-height:20px;text-align:center;color:#000">提交报价</span>
</body>
</html>
